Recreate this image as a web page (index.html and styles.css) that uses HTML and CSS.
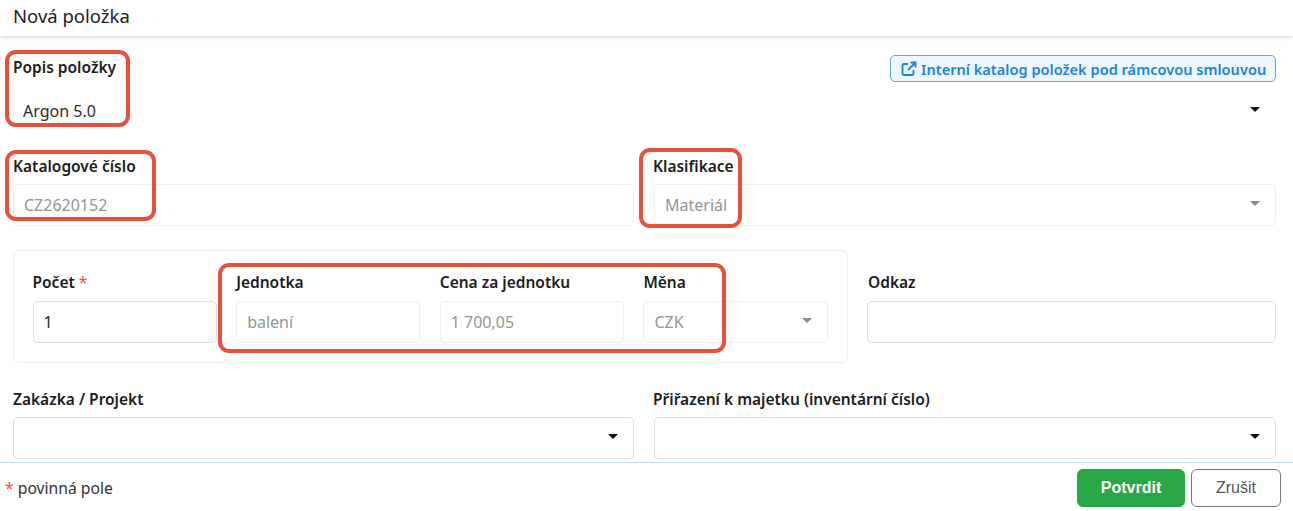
FILE: index.html
```html
<!DOCTYPE html>
<html lang="cs">
<head>
<meta charset="utf-8">
<title>Nová položka</title>
<link rel="stylesheet" href="styles.css">
</head>
<body>
<div class="dialog">
  <header class="dialog-header">Nová položka</header>
  <main class="dialog-body">
    <section class="field-block">
      <div class="label-row">
        <label class="label">Popis položky</label>
        <a class="catalog-link">
          <svg class="catalog-icon" viewBox="0 0 16 16" aria-hidden="true"><path d="M7 3H3a1.500 1.500 0 0 0-1.500 1.500v8A1.500 1.500 0 0 0 3 14h8a1.500 1.500 0 0 0 1.500-1.500V9M9.500 1.500h5v5M14.500 1.500 7 9"/></svg>
          Interní katalog položek pod rámcovou smlouvou
        </a>
      </div>
      <div class="control control-plain"><span>Argon 5.0</span><svg class="caret" viewBox="0 0 10 5"><path d="M0 0h10L5 5z"/></svg></div>
    </section>
    <section class="two-col row-second">
      <div>
        <label class="label">Katalogové číslo</label>
        <div class="control control-disabled"><span>CZ2620152</span></div>
      </div>
      <div>
        <label class="label">Klasifikace</label>
        <div class="control control-disabled"><span>Materiál</span><svg class="caret caret-muted" viewBox="0 0 10 5"><path d="M0 0h10L5 5z"/></svg></div>
      </div>
    </section>
    <section class="price-row">
      <div class="price-card">
        <div>
          <label class="label">Počet <span class="req">*</span></label>
          <div class="control"><span>1</span></div>
        </div>
        <div>
          <label class="label">Jednotka</label>
          <div class="control control-disabled"><span>balení</span></div>
        </div>
        <div>
          <label class="label">Cena za jednotku</label>
          <div class="control control-disabled"><span>1 700,05</span></div>
        </div>
        <div>
          <label class="label">Měna</label>
          <div class="control control-disabled"><span>CZK</span><svg class="caret caret-muted" viewBox="0 0 10 5"><path d="M0 0h10L5 5z"/></svg></div>
        </div>
      </div>
      <div class="link-field">
        <label class="label">Odkaz</label>
        <div class="control"></div>
      </div>
    </section>
    <section class="two-col row-last">
      <div>
        <label class="label">Zakázka / Projekt</label>
        <div class="control"><span></span><svg class="caret" viewBox="0 0 10 5"><path d="M0 0h10L5 5z"/></svg></div>
      </div>
      <div>
        <label class="label">Přiřazení k majetku (inventární číslo)</label>
        <div class="control"><span></span><svg class="caret" viewBox="0 0 10 5"><path d="M0 0h10L5 5z"/></svg></div>
      </div>
    </section>
  </main>
  <footer class="dialog-footer">
    <div class="required-note"><span class="req">*</span> povinná pole</div>
    <div class="actions">
      <button class="btn btn-confirm">Potvrdit</button>
      <button class="btn btn-cancel">Zrušit</button>
    </div>
  </footer>
</div>
<div class="mark mark-popis"></div>
<div class="mark mark-katalog"></div>
<div class="mark mark-klasifikace"></div>
<div class="mark mark-cena"></div>
</body>
</html>
```
FILE: styles.css
```css
* { box-sizing: border-box; }
html, body { margin: 0; height: 511px; overflow: hidden; background: #fff; }
body { font-family: "Noto Sans", "Open Sans", sans-serif; font-size: 16px; color: #212529; position: relative; }

.dialog { height: 511px; display: flex; flex-direction: column; }
.dialog-header { height: 36px; padding: 4px 13px 0; font-size: 18.500px; line-height: 24px; color: #222; box-shadow: 0 1px 4px rgba(0,0,0,.2); flex: none; }
.dialog-body { flex: none; height: 426px; padding: 19px 17px 0 13px; overflow: hidden; }

.label { display: block; height: 20px; line-height: 20px; font-size: 15.500px; font-weight: 600; color: #1c1c1c; white-space: nowrap; }
.two-col > div + div .label { text-indent: -1px; }
.link-field .label { margin-left: 1px; }
.label-row { display: flex; justify-content: space-between; align-items: flex-start; height: 27px; }
.label-row .label { margin-top: 2px; }
.catalog-link { display: flex; align-items: center; gap: 4px; height: 27px; width: 386px; padding-left: 10px; border: 1px solid #5aa9e6; border-radius: 5px; background: #eef7ff; color: #1d84d4; font-size: 14.600px; font-weight: 600; white-space: nowrap; }
.catalog-icon { width: 16px; height: 16px; fill: none; stroke: #1d84d4; stroke-width: 1.900; flex: none; }

.control { display: flex; align-items: center; justify-content: space-between; height: 42px; padding: 0 10px; margin-top: 8px; border: 1px solid #dedede; border-radius: 5px; background: #fff; color: #2b2b2b; }
.control-plain { border-color: transparent; padding-left: 9px; }
.control-disabled { border-color: #efefef; color: #949494; }
.caret { width: 10px; height: 5px; fill: #111; flex: none; margin-right: 5px; margin-top: -3px; }
.caret-muted { fill: #8a8a8a; }

.two-col { display: grid; grid-template-columns: 621px 1fr; gap: 20px; }
.row-second { margin-top: 24px; }
.row-last { margin-top: 26px; }

.price-row { display: grid; grid-template-columns: 835px 1fr; gap: 19px; margin-top: 24px; }
.price-card { display: grid; grid-template-columns: repeat(4, 1fr); gap: 19.500px; height: 113px; padding: 21px 19.500px 0 18.500px; border: 1px solid #ebebeb; border-radius: 7px; }
.price-card .control { margin-top: 9px; }
.link-field { padding-top: 22px; }
.link-field .control { margin-top: 9px; }
.req { color: #f0523d; font-weight: 400; }

.dialog-footer { flex: 1; display: flex; justify-content: space-between; border-top: 1px solid #c8d9f5; padding: 6px 12px 0 5px; }
.required-note { line-height: 39px; font-size: 15.700px; color: #333; }
.actions { display: flex; gap: 6px; }
.btn { height: 38px; border-radius: 6px; font-family: "Liberation Sans", Arial, sans-serif; font-size: 16px; cursor: pointer; }
.btn-confirm { width: 108px; border: 1px solid #28a745; background: #28a745; color: #fff; font-weight: 700; }
.btn-cancel { width: 90px; border: 1.500px solid #777; background: #fff; color: #555; }

.mark { position: absolute; border: 4px solid #e7503c; border-radius: 11px; pointer-events: none; }
.mark-popis { left: 5px; top: 50px; width: 125px; height: 77px; }
.mark-katalog { left: 5px; top: 150px; width: 151px; height: 71px; }
.mark-klasifikace { left: 639px; top: 148px; width: 103px; height: 80px; }
.mark-cena { left: 218px; top: 263px; width: 508px; height: 90px; }
```
